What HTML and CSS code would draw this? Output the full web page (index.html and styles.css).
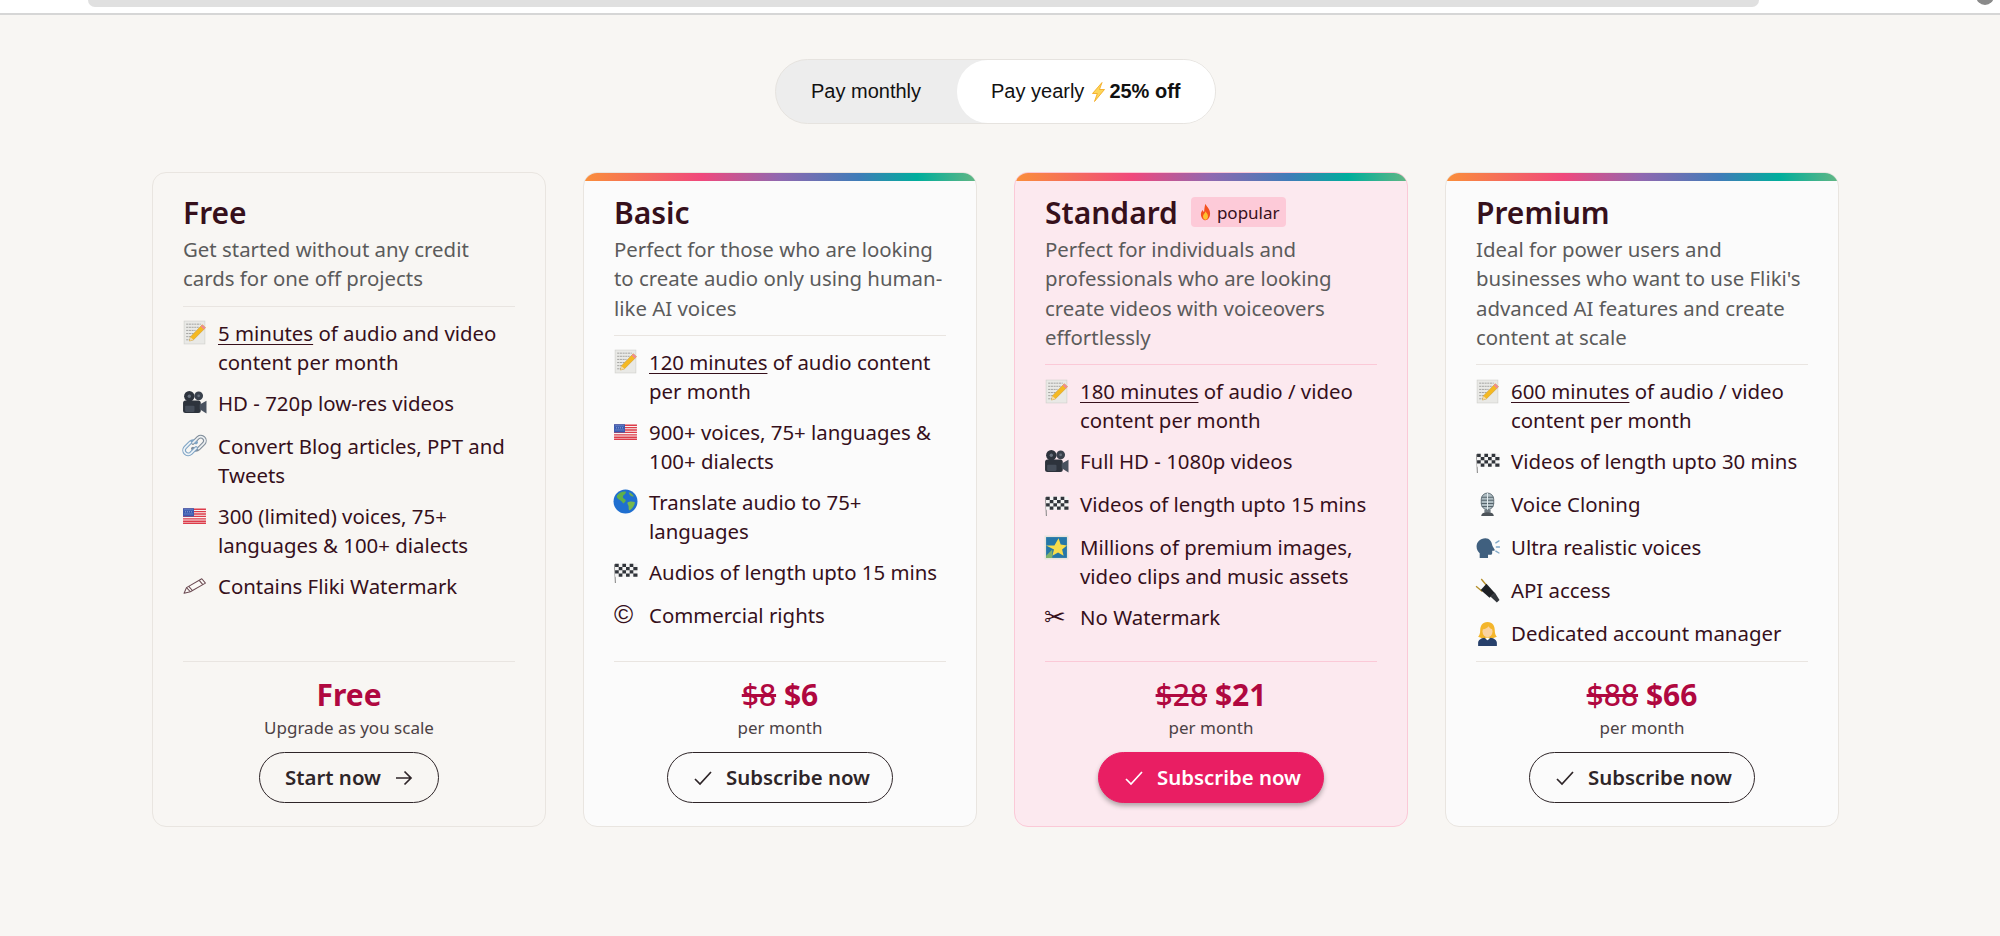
FILE: index.html
```html
<!DOCTYPE html>
<html lang="en">
<head>
<meta charset="utf-8">
<title>Pricing</title>
<link rel="stylesheet" href="styles.css">
</head>
<body>
<svg class="defs" aria-hidden="true">
  <symbol id="i-memo" viewBox="0 0 24 24">
    <rect x="2" y="1" width="20" height="22" fill="#e9e9e6" stroke="#cfcfcb" stroke-width=".6"/>
    <path d="M4 4h14M4 7h12M4 10h9M4 13h7M4 16h5M4 19h6" stroke="#8b8b88" stroke-width=".7" stroke-dasharray="2 .6"/>
    <path d="M19.5 4.5l3 3L11 19l-3.8 1.2 .9-4z" fill="#f5b921" stroke="#c98f14" stroke-width=".5"/>
    <path d="M19.5 4.5l3 3-1.6 1.6-3-3z" fill="#ee8a98"/>
    <path d="M8.1 16.2l2.9 2.8-3.8 1.2z" fill="#f3d9a8"/>
  </symbol>
  <symbol id="i-camera" viewBox="0 0 24 24">
    <circle cx="7" cy="6" r="5" fill="#2d333c"/><circle cx="16" cy="5.6" r="4.200" fill="#3a414c"/>
    <circle cx="7" cy="6" r="1.600" fill="#68717d"/><circle cx="16" cy="5.600" r="1.300" fill="#68717d"/>
    <rect x="1" y="10" width="17" height="12" rx="2.400" fill="#2d333c"/>
    <rect x="3" y="15" width="9" height="6" rx="1" fill="#454d59"/>
    <path d="M17 14l6.500-3.600V22.500L17 18.500z" fill="#49525f"/>
  </symbol>
  <symbol id="i-link" viewBox="0 0 24 24">
    <g fill="none" stroke-linecap="round">
      <path d="M10.500 9.500l5-5a3.900 3.900 0 0 1 5.500 5.500l-5 5a3.900 3.900 0 0 1-5.500 0" stroke="#7f8c99" stroke-width="3.600"/>
      <path d="M13.500 14.500l-5 5a3.900 3.900 0 0 1-5.500-5.500l5-5a3.900 3.900 0 0 1 5.500 0" stroke="#7fa4c4" stroke-width="3.600"/>
      <path d="M10.500 9.500l5-5a3.900 3.900 0 0 1 5.500 5.500l-5 5" stroke="#eceff1" stroke-width="1.600"/>
      <path d="M13.500 14.500l-5 5a3.900 3.900 0 0 1-5.500-5.500l5-5" stroke="#eef3f7" stroke-width="1.600"/>
    </g>
  </symbol>
  <symbol id="i-flag" viewBox="0 0 24 24">
    <rect x="1" y="5" width="22" height="15" fill="#f7f3f1"/>
    <path d="M1 6h22M1 8.300h22M1 10.600h22M1 12.900h22M1 15.200h22M1 17.500h22M1 19.400h22" stroke="#dd3c4a" stroke-width="1.300"/>
    <rect x="1" y="5" width="10.500" height="8" fill="#3a5bb0"/>
    <path d="M2.500 6.500h8M3 8.500h7.500M2.500 10.500h8" stroke="#c8d3ee" stroke-width=".7" stroke-dasharray=".8 1.100"/>
  </symbol>
  <symbol id="i-pencil" viewBox="0 0 24 24">
    <g fill="#fbf8f5" stroke="#6b4a52" stroke-width="1" stroke-linejoin="round">
      <path d="M19 5.500l3.500 4.200L8 18l-6 1.500 2.300-5.500z"/>
      <path d="M4.300 14L8 18M16.500 7l3.500 4.200M6.500 12.800l3.500 4"/>
    </g>
  </symbol>
  <symbol id="i-globe" viewBox="0 0 24 24">
    <circle cx="12" cy="12" r="11.500" fill="#1f6fd0"/>
    <path d="M4 6c2-2.500 5-4 8-3.500 1 1-.5 3-2 3.500-1 1.500-.5 3 1 3.500 1.500.5 1.500 2 .5 3-1 .8-1.500 2-2 1-1-2-4-3-5.500-5C3.500 8 3.500 7 4 6z" fill="#5fb04a"/>
    <path d="M14 13c2-1.500 5-1 7-.5 0 3-2 6-5 8-1 0-1-2-1-4-.5-1.500-1.500-2.300-1-3.500z" fill="#76b84e"/>
    <path d="M15 3c2 .5 4 2 5 4-1 .5-3 0-4-1.500z" fill="#6fae4b"/>
  </symbol>
  <symbol id="i-check-flag" viewBox="0 0 24 24">
    <path d="M1.500 5l.8 18" stroke="#888" stroke-width="1"/>
    <path d="M2 4.500h21.500V17H2z" fill="#f3f3f3"/>
    <path d="M2 4.500h3.500v3.100H2zM9 4.500h3.500v3.100H9zM16 4.500h3.500v3.100H16zM5.500 7.600H9v3.100H5.500zM12.500 7.600H16v3.100h-3.500zM19.500 7.600H23.500v3.100h-4zM2 10.700h3.500v3.100H2zM9 10.700h3.500v3.100H9zM16 10.700h3.500v3.100H16zM5.500 13.800H9V17H5.500zM12.500 13.800H16V17h-3.500zM19.500 13.800H23.500V17h-4z" fill="#30343a"/>
  </symbol>
  <symbol id="i-star" viewBox="0 0 24 24">
    <rect x=".5" y=".5" width="23" height="23" fill="#e7e4dc"/>
    <rect x="2" y="2" width="20" height="20" fill="#2577a8"/>
    <path d="M14 3l2 6 6 1-4.600 4 1.400 6-5.300-3.300L8 20l1.600-6L2 10h8z" fill="#f7dc4b"/>
    <path d="M2 20l6-6v8H2z" fill="#7fb26b"/>
  </symbol>
  <symbol id="i-mic" viewBox="0 0 24 24">
    <rect x="6" y="1" width="12" height="16" rx="6" fill="#aebcc2" stroke="#56646c" stroke-width=".8"/>
    <path d="M6.500 5h11M6 8h12M6 11h12M6.500 14h11" stroke="#56646c" stroke-width="1"/>
    <rect x="9" y="17" width="6" height="3" fill="#707b82"/>
    <path d="M12 17v-16" stroke="#e4ecef" stroke-width="1"/>
    <path d="M6 23c0-2.500 3-3.500 6-3.500s6 1 6 3.500z" fill="#4c5359"/>
  </symbol>
  <symbol id="i-head" viewBox="0 0 24 24">
    <path d="M10 3c-5 0-8.500 3.500-8.500 8 0 3 1.500 5 3 6.500V22h8v-3h2.500c1 0 1.500-.7 1.500-1.500v-2.500h1.800c.7 0 .8-.6.500-1l-2-3.500C16 6 14 3 10 3z" fill="#40607f"/>
    <path d="M20 7.500l3-1.800M20.500 11.500h3M20 15.500l3 1.800" stroke="#7fa7c7" stroke-width="1.300" stroke-linecap="round"/>
  </symbol>
  <symbol id="i-plug" viewBox="0 0 24 24">
    <path d="M1 8l6 5M6 1l5 6" stroke="#b58f2a" stroke-width="1.300"/>
    <path d="M5.500 11.500L11 5.500l8 9-5 4.500z" fill="#1e2125"/>
    <path d="M15 18l4-4 4.500 7-2.500 2.500z" fill="#33373c"/>
  </symbol>
  <symbol id="i-woman" viewBox="0 0 24 24">
    <path d="M12 1c-5 0-7 4-7 8 0 3-1 5-2 6l5 2h8l5-2c-1-1-2-3-2-6 0-4-2-8-7-8z" fill="#f4b62c"/>
    <ellipse cx="12" cy="10" rx="4.800" ry="5.500" fill="#fbd3a0"/>
    <path d="M7 8c2 0 5-1 6-3 1 1.500 2.500 3 4 3 0-3-2-5.500-5-5.500S7 5 7 8z" fill="#f4b62c"/>
    <path d="M3 24v-3c0-3 3-4.500 6-5l3 2.500 3-2.500c3 .5 6 2 6 5v3z" fill="#27406b"/>
    <path d="M10 16l2 2.500 2-2.500z" fill="#fff"/>
  </symbol>
  <symbol id="i-fire" viewBox="0 0 24 24">
    <path d="M12 .5c1 4 6.500 6.500 6.500 14 0 5-3 9-6.500 9s-6.500-4-6.500-8.500c0-3 1.500-4.500 2.500-6 .3 1.500 1 2.500 2 3 .5-4 .5-8 2-11.500z" fill="#f4511e"/>
    <path d="M12 11c.5 2 3.500 3.500 3.500 7 0 3-1.500 5-3.500 5s-3.500-2-3.500-5c0-2.500 3-4 3.500-7z" fill="#fdc02f"/>
  </symbol>
  <symbol id="i-bolt" viewBox="0 0 15 20">
    <path d="M11 .5L1.500 11.500h4.800L3.500 19.500 13.500 7.500H8.500z" fill="#fdd65a" stroke="#f2a516" stroke-width=".8" stroke-linejoin="round"/>
  </symbol>
  <symbol id="i-check" viewBox="0 0 20 20">
    <path d="M2 11l5 5L18 4" fill="none" stroke="currentColor" stroke-width="1.700"/>
  </symbol>
  <symbol id="i-arrow" viewBox="0 0 20 20">
    <path d="M2 10h15M10.500 3.500L17 10l-6.500 6.500" fill="none" stroke="currentColor" stroke-width="1.700"/>
  </symbol>
</svg>

<header class="chrome">
  <div class="address"></div>
  <div class="avatar"></div>
</header>

<main class="page">
  <div class="toggle">
    <button class="toggle-opt">Pay monthly</button>
    <button class="toggle-opt is-active">Pay yearly <svg class="bolt"><use href="#i-bolt"/></svg><b>25% off</b></button>
  </div>

  <section class="plans">
    <article class="card card-free">
      <h2 class="title">Free</h2>
      <p class="desc">Get started without any credit cards for one off projects</p>
      <ul class="features">
        <li><svg class="ico"><use href="#i-memo"/></svg><span><u>5 minutes</u> of audio and video content per month</span></li>
        <li><svg class="ico"><use href="#i-camera"/></svg><span>HD - 720p low-res videos</span></li>
        <li><svg class="ico"><use href="#i-link"/></svg><span>Convert Blog articles, PPT and Tweets</span></li>
        <li><svg class="ico"><use href="#i-flag"/></svg><span>300 (limited) voices, 75+ languages &amp; 100+ dialects</span></li>
        <li><svg class="ico"><use href="#i-pencil"/></svg><span>Contains Fliki Watermark</span></li>
      </ul>
      <div class="foot">
        <div class="price">Free</div>
        <div class="per">Upgrade as you scale</div>
        <a class="btn btn-start">Start now <svg class="btn-ico"><use href="#i-arrow"/></svg></a>
      </div>
    </article>

    <article class="card">
      <div class="bar"></div>
      <h2 class="title">Basic</h2>
      <p class="desc">Perfect for those who are looking to create audio only using human-like AI voices</p>
      <ul class="features">
        <li><svg class="ico"><use href="#i-memo"/></svg><span><u>120 minutes</u> of audio content per month</span></li>
        <li><svg class="ico"><use href="#i-flag"/></svg><span>900+ voices, 75+ languages &amp; 100+ dialects</span></li>
        <li><svg class="ico"><use href="#i-globe"/></svg><span>Translate audio to 75+ languages</span></li>
        <li><svg class="ico"><use href="#i-check-flag"/></svg><span>Audios of length upto 15 mins</span></li>
        <li><span class="ico ico-glyph ico-copy">©</span><span>Commercial rights</span></li>
      </ul>
      <div class="foot">
        <div class="price"><s class="old">$8</s> $6</div>
        <div class="per">per month</div>
        <a class="btn"><svg class="btn-ico"><use href="#i-check"/></svg> Subscribe now</a>
      </div>
    </article>

    <article class="card card-hot">
      <div class="bar"></div>
      <h2 class="title">Standard <span class="badge"><svg class="fire"><use href="#i-fire"/></svg>popular</span></h2>
      <p class="desc">Perfect for individuals and professionals who are looking create videos with voiceovers effortlessly</p>
      <ul class="features">
        <li><svg class="ico"><use href="#i-memo"/></svg><span><u>180 minutes</u> of audio / video content per month</span></li>
        <li><svg class="ico"><use href="#i-camera"/></svg><span>Full HD - 1080p videos</span></li>
        <li><svg class="ico"><use href="#i-check-flag"/></svg><span>Videos of length upto 15 mins</span></li>
        <li><svg class="ico"><use href="#i-star"/></svg><span>Millions of premium images, video clips and music assets</span></li>
        <li><span class="ico ico-glyph">✂</span><span>No Watermark</span></li>
      </ul>
      <div class="foot">
        <div class="price"><s class="old">$28</s> $21</div>
        <div class="per">per month</div>
        <a class="btn btn-primary"><svg class="btn-ico"><use href="#i-check"/></svg> Subscribe now</a>
      </div>
    </article>

    <article class="card">
      <div class="bar"></div>
      <h2 class="title">Premium</h2>
      <p class="desc">Ideal for power users and businesses who want to use Fliki's advanced AI features and create content at scale</p>
      <ul class="features">
        <li><svg class="ico"><use href="#i-memo"/></svg><span><u>600 minutes</u> of audio / video content per month</span></li>
        <li><svg class="ico"><use href="#i-check-flag"/></svg><span>Videos of length upto 30 mins</span></li>
        <li><svg class="ico"><use href="#i-mic"/></svg><span>Voice Cloning</span></li>
        <li><svg class="ico"><use href="#i-head"/></svg><span>Ultra realistic voices</span></li>
        <li><svg class="ico"><use href="#i-plug"/></svg><span>API access</span></li>
        <li><svg class="ico"><use href="#i-woman"/></svg><span>Dedicated account manager</span></li>
      </ul>
      <div class="foot">
        <div class="price"><s class="old">$88</s> $66</div>
        <div class="per">per month</div>
        <a class="btn"><svg class="btn-ico"><use href="#i-check"/></svg> Subscribe now</a>
      </div>
    </article>
  </section>
</main>
</body>
</html>
```
FILE: styles.css
```css
* { box-sizing: border-box; }
html, body { margin: 0; height: 100%; overflow: hidden; }
body {
  background: #f8f6f3;
  color: #36101b;
  font-family: "Noto Sans", "Open Sans", sans-serif;
  font-size: 20.400px;
  line-height: 29px;
}
.defs { display: none; }

.chrome {
  height: 15px;
  background: #fff;
  border-bottom: 2px solid #d6d6d6;
  display: flex;
  align-items: flex-start;
  padding-left: 88px;
  overflow: hidden;
}
.address {
  width: 1671px;
  height: 7px;
  background: #e0e0e0;
  border-radius: 0 0 16px 16px;
}
.avatar {
  width: 18px;
  height: 18px;
  margin: -13px 0 0 217px;
  border-radius: 50%;
  background: #8a8a8a;
}

.page {
  padding: 44px 9px 0 0;
  display: flex;
  flex-direction: column;
  align-items: center;
}

.toggle {
  display: flex;
  align-items: stretch;
  height: 65px;
  width: 441px;
  padding: 2px;
  background: #ededed;
  border: 1px solid #e6e3df;
  border-radius: 33px;
  font-family: "Liberation Sans", Arial, sans-serif;
}
.toggle-opt {
  border: 0;
  background: transparent;
  color: #111;
  font: inherit;
  font-size: 20px;
  padding: 0 0 0 33px;
  flex: 0 0 179px;
  text-align: left;
  white-space: nowrap;
}
.toggle-opt.is-active {
  flex: 1;
  background: #fff;
  border-radius: 31px;
  margin: -2px -2px -2px 0;
  padding-left: 34px;
  display: flex;
  align-items: center;
  gap: 5px;
}
.bolt { width: 15px; height: 20px; margin-left: 2px; }
.toggle-opt b { margin-left: -2px; }

.plans {
  width: 1687px;
  margin-top: 48px;
  display: grid;
  grid-template-columns: repeat(4, 1fr);
  gap: 37px;
}
.card {
  position: relative;
  overflow: hidden;
  display: flex;
  flex-direction: column;
  padding: 19px 30px 23px;
  background: #fbfbfb;
  border: 1.500px solid #e9e5e0;
  border-radius: 14px;
}
.card-free { background: #f8f6f3; }
.card-hot { background: #fce9ef; border-color: #fbc9d7; }
.bar {
  position: absolute;
  top: 0;
  left: 0;
  right: 0;
  height: 7.500px;
  background: linear-gradient(90deg, #fa8f3a 0%, #f0487c 30%, #8f68b0 50%, #3f7cb8 70%, #00ae9c 85%, #62b684 100%);
}
.title {
  display: flex;
  align-items: center;
  gap: 13px;
  margin: 0 0 3px;
  height: 40px;
  font-size: 30px;
  font-weight: 600;
}
.badge {
  display: inline-flex;
  align-items: center;
  height: 30px;
  padding: 0 6px;
  background: #fdcad8;
  border-radius: 4px;
  font-size: 17px;
  font-weight: 400;
}
.fire { width: 17px; height: 20px; margin-right: 3px; }
.desc {
  margin: 0;
  padding-bottom: 12px;
  color: #5b5b5b;
  line-height: 29.300px;
  border-bottom: 1.500px solid #e9e5e1;
}
.card-hot .desc, .card-hot .foot { border-color: #fbc9d7; }

.features {
  list-style: none;
  margin: 12px 0 -1px;
  padding: 0;
}
.features li {
  display: flex;
  gap: 11px;
  min-height: 31px;
  margin-bottom: 12px;
}
.ico {
  flex: 0 0 25px;
  width: 25px;
  height: 25px;
  margin: 1.500px 0 0 -1px;
}
.ico-glyph {
  font-family: "DejaVu Sans", sans-serif;
  font-size: 26px;
  line-height: 25px;
}
.ico-copy {
  font-family: "Liberation Sans", sans-serif;
  font-size: 26px;
  padding-left: 1px;
}
u { text-underline-offset: 3px; text-decoration-thickness: 1px; }

.foot {
  margin-top: auto;
  border-top: 1.500px solid #e9e5e1;
  padding-top: 13px;
  text-align: center;
  display: flex;
  flex-direction: column;
  align-items: center;
}
.price {
  height: 40px;
  line-height: 40px;
  color: #b00840;
  font-size: 30px;
  font-weight: 700;
}
.old { font-weight: 500; }
.per {
  height: 24px;
  margin-top: 1px;
  line-height: 24px;
  font-size: 17px;
  color: #4c4245;
}
.btn {
  margin-top: 12px;
  height: 51px;
  display: inline-flex;
  align-items: center;
  gap: 13px;
  padding: 0 22px 0 25px;
  color: #2e2528;
  border: 1.500px solid #2e2528;
  border-radius: 26px;
  font-weight: 600;
  white-space: nowrap;
}
.btn-start { padding: 0 24px 0 25px; }
.btn-primary {
  background: #e91e63;
  border-color: #e91e63;
  color: #fff;
  box-shadow: 0 3px 5px rgba(0, 0, 0, .3);
}
.btn-ico { width: 20px; height: 20px; flex: 0 0 20px; }
```
